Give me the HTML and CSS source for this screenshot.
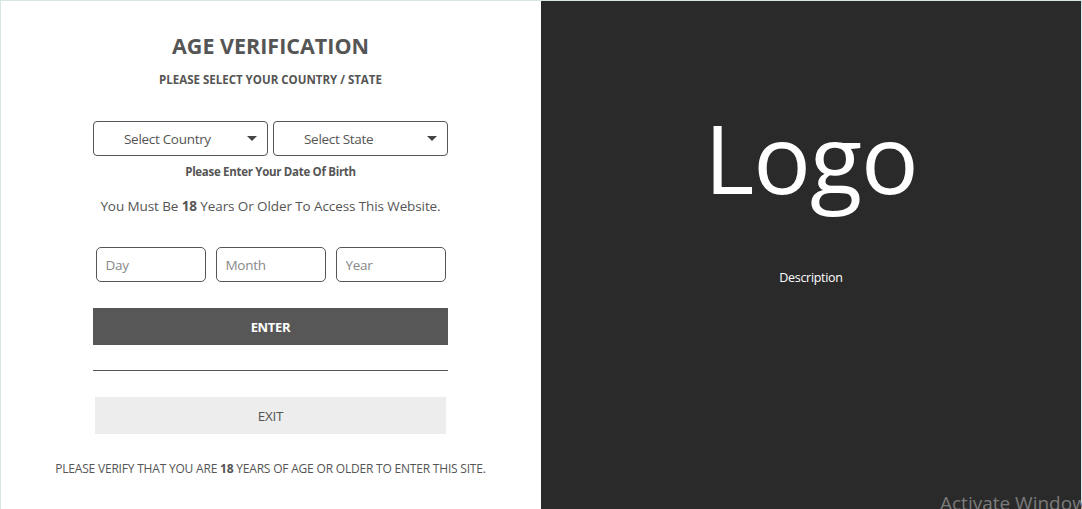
FILE: index.html
```html
<!DOCTYPE html>
<html lang="en">
<head>
<meta charset="utf-8">
<title>Age Verification</title>
<link rel="stylesheet" href="styles.css">
</head>
<body>
<div class="frame">
  <div class="modal">
    <section class="form-panel">
      <h1 class="title">AGE VERIFICATION</h1>
      <p class="subtitle">PLEASE SELECT YOUR COUNTRY / STATE</p>
      <div class="selects">
        <div class="select"><span>Select Country</span><i class="caret"></i></div>
        <div class="select"><span>Select State</span><i class="caret"></i></div>
      </div>
      <p class="dob-label">Please Enter Your Date Of Birth</p>
      <p class="notice">You Must Be <b>18</b> Years Or Older To Access This Website.</p>
      <div class="dob">
        <input class="field" type="text" placeholder="Day">
        <input class="field" type="text" placeholder="Month">
        <input class="field" type="text" placeholder="Year">
      </div>
      <button class="btn-enter">ENTER</button>
      <hr class="divider">
      <button class="btn-exit">EXIT</button>
      <p class="footer">PLEASE VERIFY THAT YOU ARE <b>18</b> YEARS OF AGE OR OLDER TO ENTER THIS SITE.</p>
    </section>
    <section class="brand-panel">
      <div class="logo">Logo</div>
      <div class="desc">Description</div>
    </section>
  </div>
  <div class="watermark">Activate Windows</div>
</div>
</body>
</html>
```

FILE: styles.css
```css
* { box-sizing: border-box; }
html, body { margin: 0; padding: 0; }
body {
  width: 1082px;
  height: 509px;
  overflow: hidden;
  background: #fff;
  font-family: "Open Sans", "Noto Sans", sans-serif;
  color: #555;
}
.frame {
  position: relative;
  width: 1082px;
  height: 509px;
  border-top: 1px solid #d3e7e4;
  border-left: 1px solid #d3e7e4;
  border-right: 1px solid #d3e7e4;
}
.modal {
  display: flex;
  height: 100%;
}
.form-panel {
  width: 540px;
  display: flex;
  flex-direction: column;
  align-items: center;
  padding-top: 31px;
  padding-right: 1px;
}
.title {
  margin: 0;
  font-size: 21.5px;
  font-weight: 700;
  line-height: 28px;
  letter-spacing: 0;
}
.subtitle {
  margin: 13px 0 0;
  font-size: 11.5px;
  font-weight: 700;
  line-height: 14px;
  letter-spacing: 0;
}
.selects {
  display: flex;
  gap: 5px;
  margin-top: 34px;
}
.select {
  width: 175px;
  height: 35px;
  border: 1px solid #555;
  border-radius: 4px;
  display: flex;
  align-items: center;
  padding-left: 30px;
  position: relative;
  font-size: 13.5px;
  color: #555;
}
.select span { letter-spacing: -0.3px; }
.caret {
  position: absolute;
  right: 10px;
  top: 14px;
  width: 0;
  height: 0;
  border-left: 5px solid transparent;
  border-right: 5px solid transparent;
  border-top: 5px solid #444;
}
.dob-label {
  margin: 9px 0 0;
  font-size: 11.5px;
  font-weight: 700;
  line-height: 14px;
  letter-spacing: -0.3px;
}
.notice {
  margin: 18px 0 0;
  font-size: 13.5px;
  line-height: 18px;
  letter-spacing: -0.1px;
}
.notice b { font-weight: 700; }
.dob {
  display: flex;
  gap: 10px;
  margin-top: 32px;
}
.field {
  width: 110px;
  height: 35px;
  border: 1px solid #555;
  border-radius: 5px;
  padding: 0 9px;
  font-family: inherit;
  font-size: 13.5px;
  color: #555;
  background: #fff;
  outline: none;
}
.field::placeholder { color: #888; letter-spacing: -0.3px; }
.btn-enter {
  margin-top: 26px;
  width: 355px;
  height: 37px;
  border: 0;
  background: #575757;
  color: #fff;
  font-family: inherit;
  font-size: 13px;
  font-weight: 700;
  letter-spacing: -0.3px;
}
.divider {
  margin: 25px 0 0;
  width: 355px;
  border: 0;
  border-top: 1px solid #555;
  height: 0;
}
.btn-exit {
  margin-top: 26px;
  width: 351px;
  height: 37px;
  border: 0;
  background: #ededed;
  color: #555;
  font-family: inherit;
  font-size: 13.5px;
  letter-spacing: -0.3px;
}
.footer {
  margin: 28px 0 0;
  font-size: 12px;
  line-height: 14px;
  letter-spacing: -0.2px;
}
.footer b { font-weight: 700; }
.brand-panel {
  flex: 1;
  background: #2a2a2a;
  color: #fff;
  display: flex;
  flex-direction: column;
  align-items: center;
  padding-top: 96px;
}
.logo {
  font-size: 96px;
  font-weight: 400;
  line-height: 120px;
  letter-spacing: -1px;
}
.desc {
  margin-top: 53px;
  font-size: 12.5px;
  line-height: 16px;
  letter-spacing: -0.3px;
}
.watermark {
  position: absolute;
  left: 939px;
  top: 490px;
  font-size: 19px;
  color: #7a7a7a;
  white-space: nowrap;
  line-height: 24px;
}
```
